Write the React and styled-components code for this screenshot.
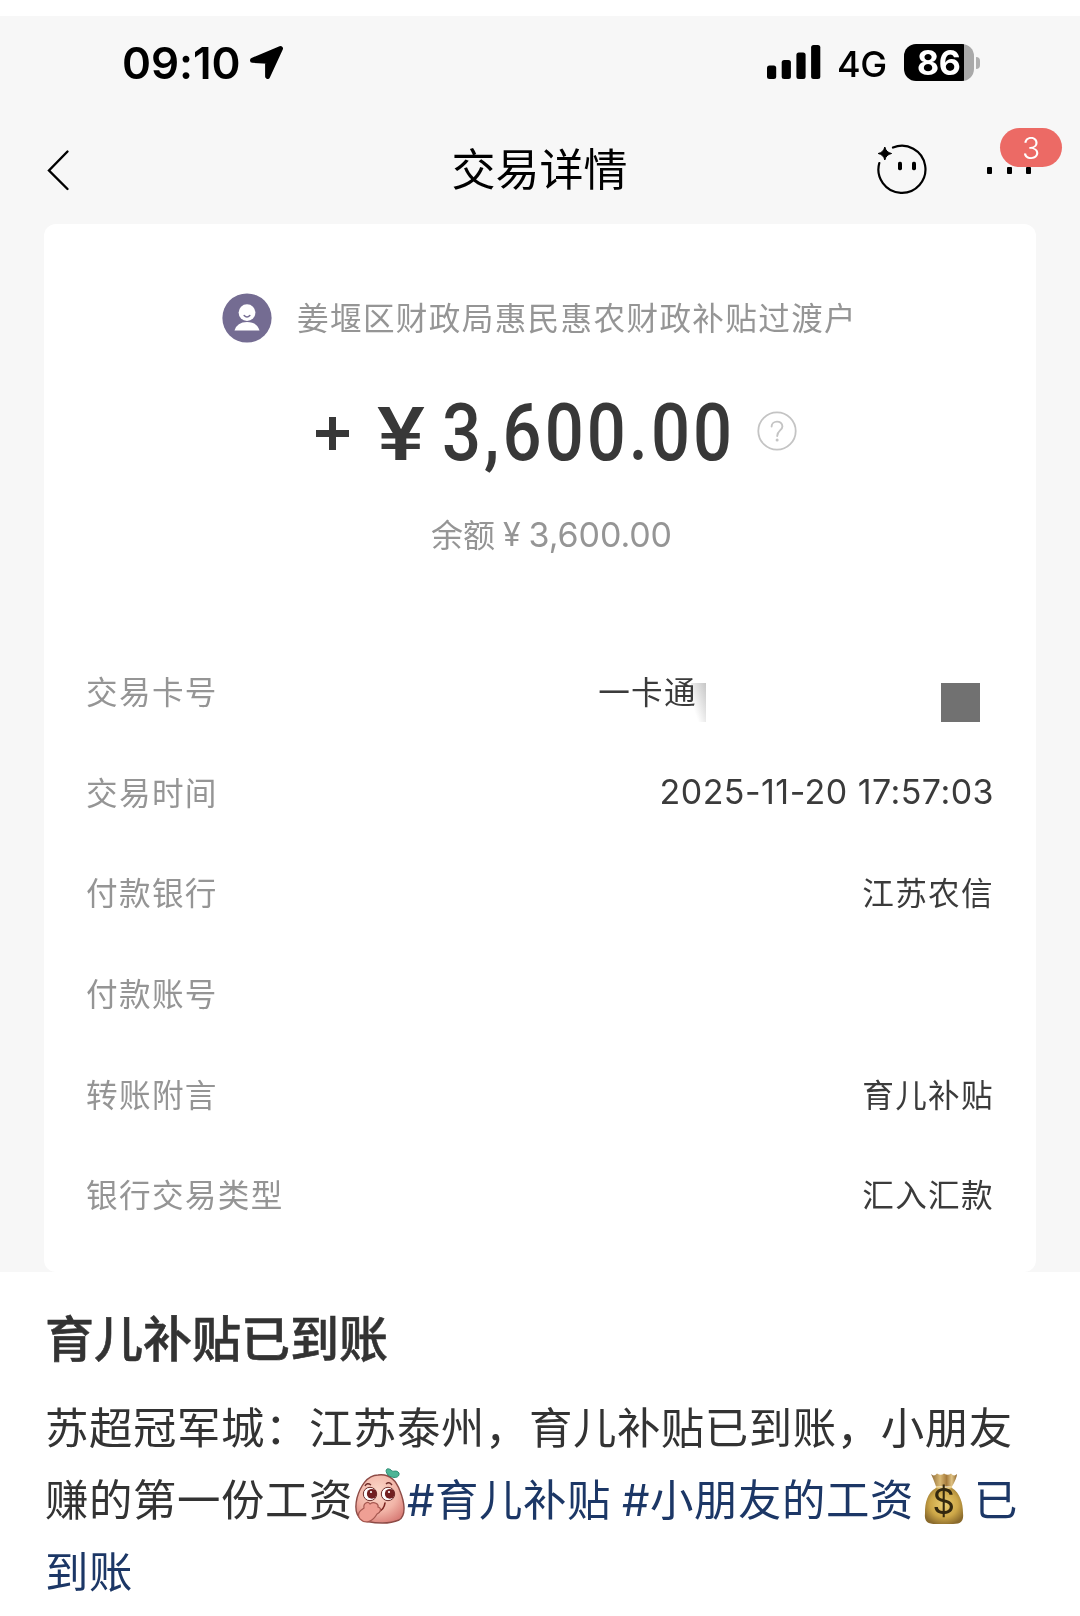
import styled, { createGlobalStyle } from 'styled-components';

const details = [
  { label: '交易卡号', value: '一卡通', masked: true },
  { label: '交易时间', value: '2025-11-20 17:57:03', latin: true },
  { label: '付款银行', value: '江苏农信' },
  { label: '付款账号', value: '' },
  { label: '转账附言', value: '育儿补贴' },
  { label: '银行交易类型', value: '汇入汇款' },
];

const LocationIcon = () => (
  <svg width="36" height="36" viewBox="0 0 36 36">
    <path
      d="M3.5 15.3 L31.5 3.5 L18.6 31.5 V16.2 Z"
      fill="#000"
      stroke="#000"
      strokeWidth="5"
      strokeLinejoin="round"
    />
  </svg>
);

const SignalIcon = () => (
  <svg width="54" height="36" viewBox="0 0 54 36">
    <rect x="0" y="21.5" width="9.2" height="13.5" rx="2.5" />
    <rect x="14.7" y="16" width="9.2" height="19" rx="2.5" />
    <rect x="29.4" y="8.5" width="9.2" height="26.5" rx="2.5" />
    <rect x="44.1" y="1" width="9.2" height="34" rx="2.5" />
  </svg>
);

const BackIcon = () => (
  <svg width="24" height="44" viewBox="0 0 24 44">
    <path d="M20.5 3.5 L2 22.5 L20.5 41" fill="none" stroke="#000" strokeWidth="2.4" strokeLinecap="round" />
  </svg>
);

const AssistantIcon = () => (
  <svg width="52" height="52" viewBox="0 0 52 52">
    <path d="M17 4.6 A23.5 23.5 0 1 1 3.3 20" fill="none" stroke="#000" strokeWidth="2.2" strokeLinecap="round" />
    <path d="M8.8 4 Q10 9.3 15.6 10.5 Q10 11.7 8.8 17 Q7.6 11.7 2.2 10.5 Q7.6 9.3 8.8 4 Z" stroke="#000" />
    <rect x="22" y="18.8" width="4" height="8.4" rx="1.6" />
    <rect x="36" y="18.8" width="4" height="8.4" rx="1.6" />
  </svg>
);

const AvatarIcon = () => (
  <svg width="50" height="50" viewBox="0 0 50 50">
    <circle cx="25" cy="25" r="24.6" fill="#746c92" />
    <circle cx="25" cy="19.6" r="8.4" fill="#fff" />
    <path d="M22.2 22.5 Q25 25.4 27.8 22.5" fill="none" stroke="#746c92" strokeWidth="1.6" strokeLinecap="round" />
    <path d="M12.5 37.5 Q15 29 25 29 Q35 29 37.5 37.5 Z" fill="#fff" />
  </svg>
);

const HelpIcon = () => (
  <svg width="40" height="40" viewBox="0 0 40 40" fill="none" stroke="#c4c4c4">
    <circle cx="20" cy="20" r="18.7" strokeWidth="1.8" />
    <path d="M14.6 15.6 C14.6 9 25.4 9 25.4 15.4 C25.4 19.4 20.2 19.6 20.2 25" strokeWidth="1.9" strokeLinecap="round" />
    <circle cx="20.1" cy="29" r="1.5" fill="#c4c4c4" stroke="none" />
  </svg>
);

const PeachEmoji = () => (
  <svg width="54" height="58" viewBox="0 0 54 58">
    <defs>
      <radialGradient id="peach" cx="45%" cy="35%" r="70%">
        <stop offset="0" stopColor="#fbd8c9" />
        <stop offset="0.6" stopColor="#f2b5a8" />
        <stop offset="1" stopColor="#d97e78" />
      </radialGradient>
    </defs>
    <path
      d="M25 8 C14 8 7 20 4 31 C1 44 4 53 14 54.5 C25 56.5 38 56.5 46 53 C54 48 51 34 47 24 C43 13 36 6.5 25 8 Z"
      fill="url(#peach)"
      stroke="#8d4b46"
      strokeWidth="1.4"
    />
    <path d="M35 8 C31 3 34 0 38 3 C40 6 43 2 46 6 C47 11 40 12 35 8 Z" fill="#4db596" stroke="#2d8c73" />
    <path d="M12 19 Q14 15 18 18 M33 17 Q36 14 39 18" fill="none" stroke="#6d2d2a" strokeWidth="1.4" />
    <circle cx="17" cy="27" r="6.7" fill="#fff" stroke="#6d2d2a" />
    <circle cx="35" cy="27" r="6.7" fill="#fff" stroke="#6d2d2a" />
    <circle cx="18.8" cy="26.8" r="4.9" fill="#721f20" />
    <circle cx="36.8" cy="26.8" r="4.9" fill="#721f20" />
    <circle cx="18" cy="25" r="1.1" fill="#fff" />
    <circle cx="36" cy="25" r="1.1" fill="#fff" />
    <path d="M25 45 Q31 43 32 36" fill="none" stroke="#7a2420" strokeWidth="1.6" strokeLinecap="round" />
    <path
      d="M7 52 C3 46 8 43 11 41 C10 36 15 34 17 37 C21 34 26 37 25 40 C29 41 28 45 24 47 C20 54 13 58 7 52 Z"
      fill="#ef9f94"
      stroke="#a65850"
      strokeWidth="1.2"
    />
  </svg>
);

const MoneyBagEmoji = () => (
  <MoneyBag>
    <svg width="40" height="54" viewBox="0 0 40 54">
      <defs>
        <radialGradient id="bag" cx="50%" cy="45%" r="60%">
          <stop offset="0" stopColor="#ebce72" />
          <stop offset="0.6" stopColor="#cda748" />
          <stop offset="1" stopColor="#8a6a2c" />
        </radialGradient>
        <linearGradient id="neck" x1="0" x2="1">
          <stop offset="0" stopColor="#8f6c38" />
          <stop offset="0.35" stopColor="#dab974" />
          <stop offset="0.6" stopColor="#a57a3b" />
          <stop offset="0.8" stopColor="#e0c384" />
          <stop offset="1" stopColor="#906830" />
        </linearGradient>
      </defs>
      <path d="M12 17 C3 22 1 32 1 42 C0 51 4 53 12 53 H29 C37 53 40 50 39 42 C39 32 36 22 28 17 Z" fill="url(#bag)" />
      <path d="M7 3 Q10 6 13 2.5 Q17 5 20 2.5 Q24 5 27 2.5 Q30 6 33 3 Q33 7 28 15.5 H12 Q9 7 7 3 Z" fill="url(#neck)" />
      <path d="M12 16 Q20 18.5 28 16" fill="none" stroke="#e9cc83" strokeWidth="2" />
    </svg>
    <span>$</span>
  </MoneyBag>
);

const App = () => {
  return (
    <>
      <GlobalStyle />
      <Screen>
        <StatusBar>
          <Clock>
            09:10
            <LocationIcon />
          </Clock>
          <Indicators>
            <SignalIcon />
            <Network>4G</Network>
            <Battery>86</Battery>
          </Indicators>
        </StatusBar>
        <NavBar>
          <NavSide>
            <BackIcon />
          </NavSide>
          <h1>交易详情</h1>
          <NavSide $end>
            <AssistantIcon />
            <More>
              <i />
              <i />
              <i />
              <Badge>3</Badge>
            </More>
          </NavSide>
        </NavBar>
        <Card>
          <Payer>
            <AvatarIcon />
            <span>姜堰区财政局惠民惠农财政补贴过渡户</span>
          </Payer>
          <Amount>
            <Plus />
            <Currency>¥</Currency>
            <Figure>
              <span>3,600.00</span>
            </Figure>
            <HelpIcon />
          </Amount>
          <Balance>
            <em>余额</em>
            <small>¥</small>
            <span>3,600.00</span>
          </Balance>
          <Details>
            {details.map((item) => (
              <Row key={item.label}>
                <dt>{item.label}</dt>
                <Value $latin={item.latin}>
                  {item.value}
                  {item.masked && (
                    <Mask>
                      <i />
                      <i />
                    </Mask>
                  )}
                </Value>
              </Row>
            ))}
          </Details>
        </Card>
      </Screen>
      <Post>
        <h2>育儿补贴已到账</h2>
        <p>
          苏超冠军城：江苏泰州，育儿补贴已到账，小朋友
          <br />
          赚的第一份工资
          <PeachEmoji />
          <Tag>#育儿补贴</Tag>
          <Tag $gap>#小朋友的工资</Tag>
          <MoneyBagEmoji />
          <Tag>
            已<br />
            到账
          </Tag>
        </p>
      </Post>
    </>
  );
};

const GlobalStyle = createGlobalStyle`
  * {
    box-sizing: border-box;
  }

  body {
    margin: 0;
    padding-top: 16px;
    background: #fff;
    font-family: Inter, 'Noto Sans CJK SC', sans-serif;
  }

  h1, h2, p, dl, dt, dd {
    margin: 0;
    font-weight: 400;
  }

  svg {
    display: block;
    flex-shrink: 0;
  }
`;

const Screen = styled.div`
  width: 1080px;
  height: 1256px;
  background: #f7f7f7;
`;

const StatusBar = styled.div`
  height: 100px;
  padding: 0 106px 6px 122px;
  display: flex;
  align-items: center;
  justify-content: space-between;
`;

const Clock = styled.div`
  display: flex;
  align-items: center;
  gap: 9px;
  font-size: 44px;
  font-weight: 600;
  line-height: 1;
  letter-spacing: -0.1px;
`;

const Indicators = styled.div`
  margin-top: -2px;
  display: flex;
  align-items: center;
  line-height: 1;
`;

const Network = styled.span`
  margin: 4px 0 0 16px;
  width: 67px;
  font-size: 36px;
  font-weight: 500;
  letter-spacing: -0.5px;
`;

const Battery = styled.div`
  position: relative;
  width: 70px;
  height: 37px;
  padding-left: 13px;
  border-radius: 12px;
  background: linear-gradient(90deg, #000 60px, #a9a9a9 60px);
  color: #fff;
  font-size: 34px;
  font-weight: 700;
  line-height: 38px;
  letter-spacing: -0.5px;

  &::after {
    content: '';
    position: absolute;
    top: 13px;
    right: -6px;
    width: 4px;
    height: 12px;
    border-radius: 0 4px 4px 0;
    background: #b0b0b0;
  }
`;

const NavBar = styled.div`
  height: 108px;
  padding: 0 48px 0 47px;
  display: flex;
  align-items: center;

  h1 {
    font-size: 44px;
    line-height: 60px;
  }
`;

const NavSide = styled.div`
  flex: 1;
  display: flex;
  align-items: center;
  justify-content: ${({ $end }) => ($end ? 'flex-end' : 'flex-start')};

  > svg {
    margin-top: ${({ $end }) => ($end ? '-3px' : '0')};
  }
`;

const More = styled.div`
  position: relative;
  margin: 1px 1px 0 59px;
  display: flex;
  gap: 14.5px;

  i {
    width: 5px;
    height: 7.5px;
    border-radius: 1px;
    background: #000;
  }
`;

const Badge = styled.span`
  position: absolute;
  top: -39px;
  left: 13px;
  width: 62px;
  height: 39.5px;
  border-radius: 20px;
  background: #ec6a65;
  color: #fff;
  font-size: 30px;
  font-weight: 300;
  line-height: 41px;
  text-align: center;
`;

const Card = styled.div`
  height: 1048px;
  margin: 0 44px;
  padding-top: 66px;
  border-radius: 12px;
  background: #fff;
`;

const Payer = styled.div`
  height: 56px;
  padding-left: 178px;
  display: flex;
  align-items: center;
  gap: 25px;
  color: #959595;
  font-size: 31.6px;
  letter-spacing: 1.35px;

  span {
    margin-top: -5px;
  }
`;

const Amount = styled.div`
  height: 110px;
  margin-top: 30px;
  padding-left: 272px;
  display: flex;
  align-items: center;
  color: #383838;
  font-family: Roboto, sans-serif;
  line-height: 1;
`;

const Plus = styled.span`
  width: 33px;
  height: 33px;
  margin-top: 4px;
  background:
    linear-gradient(#383838, #383838) center / 33px 7px no-repeat,
    linear-gradient(#383838, #383838) center / 7px 33px no-repeat;
`;

const Currency = styled.span`
  width: 65px;
  margin: 7px 0 0 28px;
  font-size: 74px;
  font-weight: 500;
  transform: scaleX(1.22);
  transform-origin: left;
`;

const Figure = styled.span`
  width: 315px;
  margin-top: 4px;

  span {
    display: block;
    width: max-content;
    font-size: 79px;
    font-weight: 550;
    letter-spacing: 3.5px;
    transform: scaleX(0.87);
    transform-origin: left;
  }
`;

const Balance = styled.div`
  height: 60px;
  margin-top: 18px;
  padding-left: 387px;
  display: flex;
  align-items: center;
  color: #959595;
  font-size: 32px;

  em {
    margin-top: -3px;
    font-style: normal;
  }

  small {
    margin: 1px 8px 0;
    font-size: 32px;
  }

  span {
    font-size: 34px;
    letter-spacing: -0.1px;
  }
`;

const Details = styled.dl`
  margin-top: 76px;
  padding: 0 42px;
`;

const Row = styled.div`
  height: 100.6px;
  display: flex;
  align-items: center;
  justify-content: space-between;
  font-size: 31.6px;
  letter-spacing: 1.35px;

  dt {
    color: #959595;
  }
`;

const Value = styled.dd`
  display: flex;
  align-items: center;
  padding-top: ${({ $latin }) => ($latin ? '2px' : '0')};
  color: #3b3b3b;
  font-size: ${({ $latin }) => ($latin ? '34px' : '31.6px')};
  letter-spacing: ${({ $latin }) => ($latin ? '0.45px' : '1.35px')};
`;

const Mask = styled.span`
  width: 289px;
  margin: 25px 14px 0 -6px;
  display: flex;
  justify-content: space-between;

  i {
    width: 39px;
    height: 39px;
    background: #717171;
  }

  i:first-child {
    width: 15px;
    background: linear-gradient(70deg, #fff 25%, #c6c6c6);
    mix-blend-mode: multiply;
  }
`;

const Post = styled.div`
  padding: 32px 46px 0 45px;
  color: #333;

  h2 {
    font-size: 49px;
    font-weight: 500;
    line-height: 71px;
    -webkit-text-stroke: 0.6px #333;
  }

  p {
    margin-top: 18px;
    font-size: 43.4px;
    line-height: 71.8px;
    letter-spacing: 0.6px;
    white-space: nowrap;
  }

  svg {
    display: inline-block;
    vertical-align: -9px;
  }
`;

const Tag = styled.span`
  margin-left: ${({ $gap }) => ($gap ? '11px' : '0')};
  color: #1c3766;
`;

const MoneyBag = styled.span`
  position: relative;
  display: inline-block;
  margin: 0 10px;
  line-height: 1;

  span {
    position: absolute;
    left: 0;
    right: 0;
    top: 13px;
    color: #33280f;
    font-size: 35px;
    text-align: center;
  }
`;

export default App;
